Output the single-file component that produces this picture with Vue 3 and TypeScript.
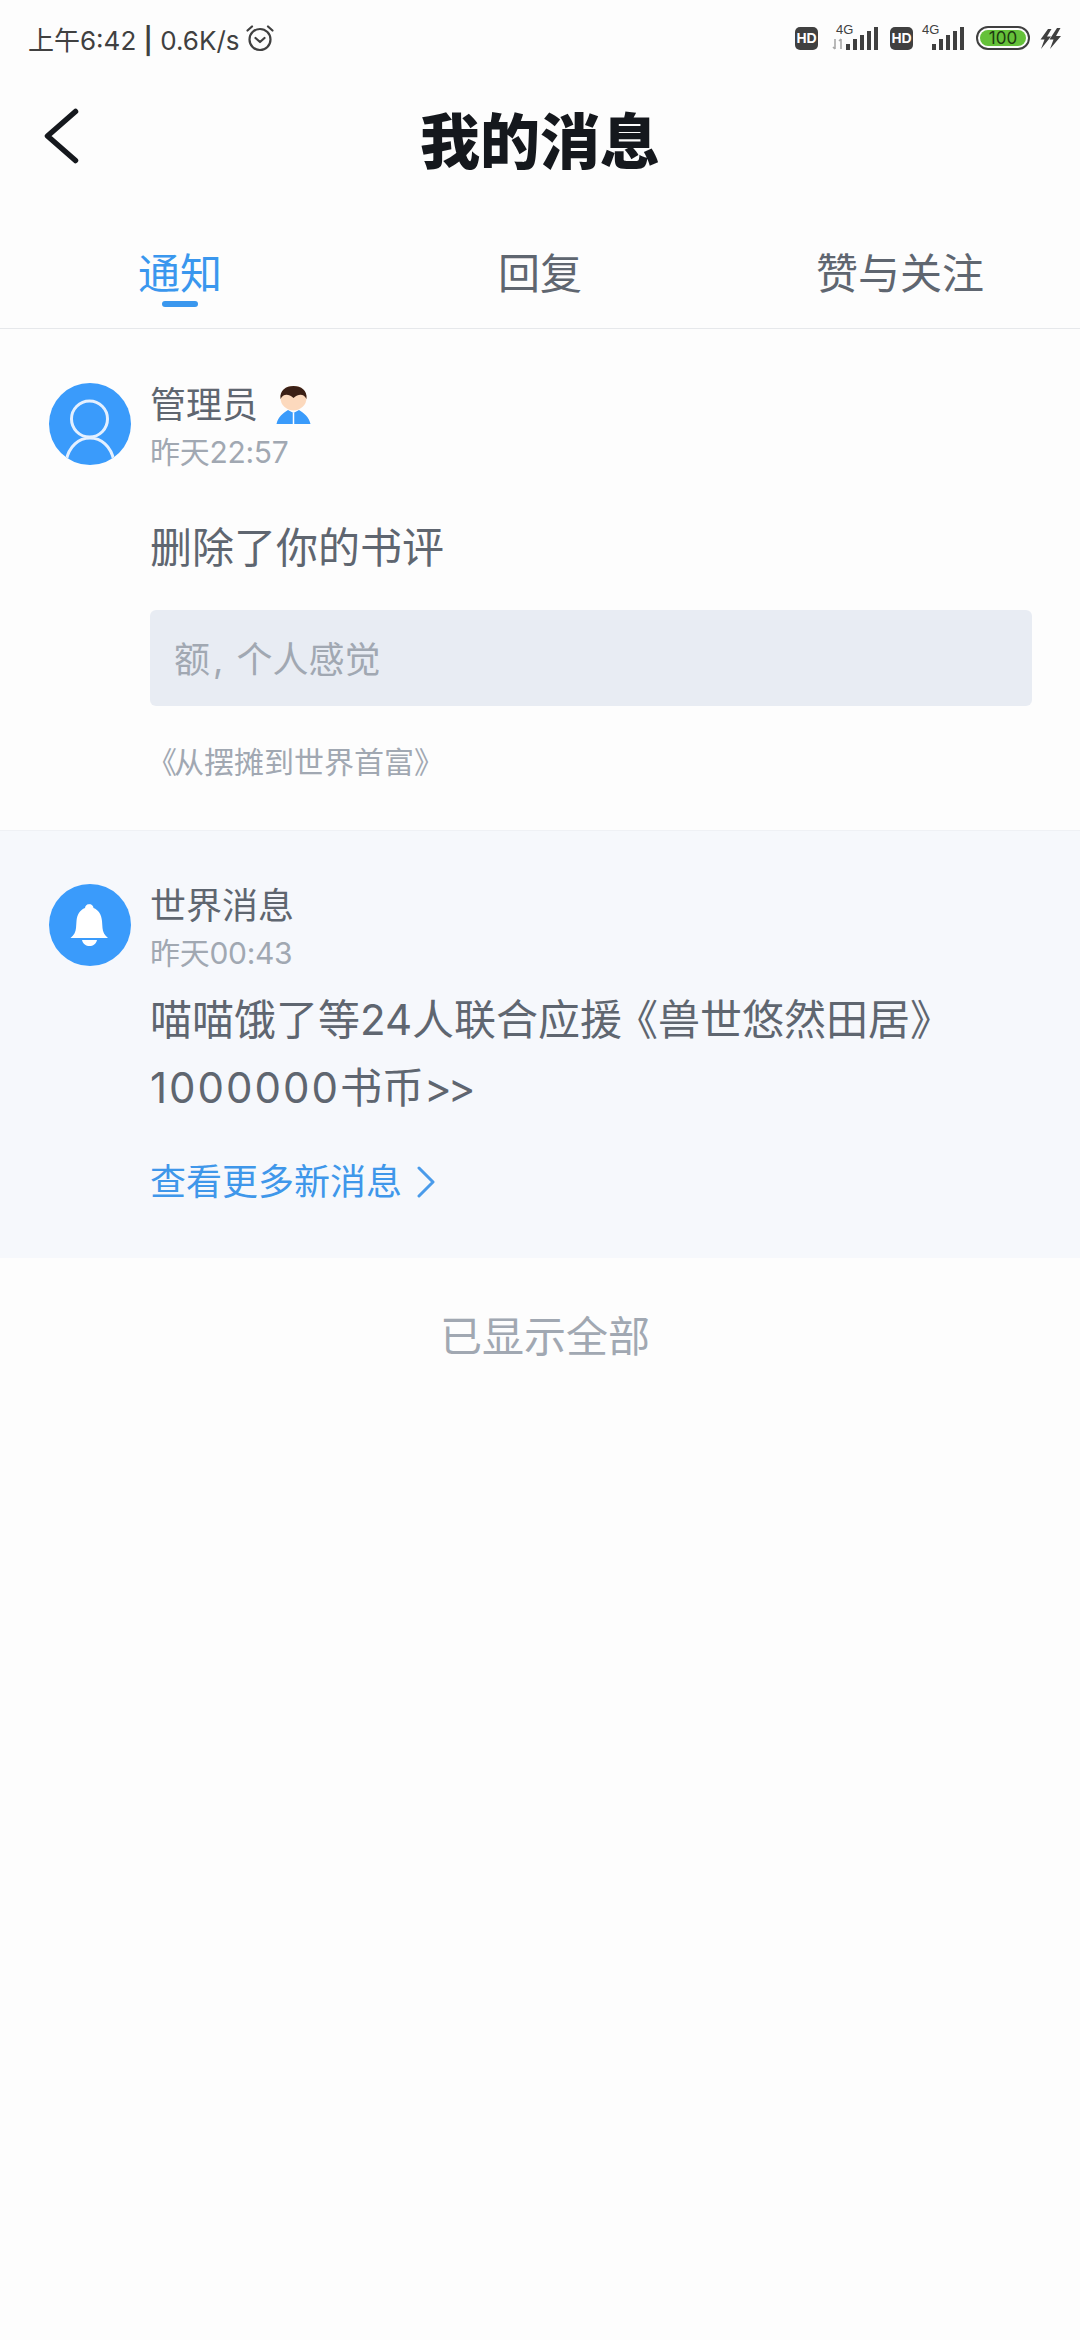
<template>
  <div class="page">
    <div class="status-bar">
      <div class="status-left">
        <span>上午6:42 <b>|</b> 0.6K/s</span>
        <svg class="alarm" viewBox="0 0 28 28" width="28" height="28" fill="none" stroke="#404040" stroke-width="2.2" stroke-linecap="round" stroke-linejoin="round">
          <circle cx="14" cy="15.5" r="10.5" />
          <path d="M9.5 14l4.5 4 4.5-4" />
          <path d="M1.5 6.5L6 2.5M26.500 6.500L22 2.500" />
        </svg>
      </div>
      <div class="status-right">
        <span class="hd">HD</span>
        <div class="signal">
          <span class="net">4G</span>
          <svg class="arrows" viewBox="0 0 12 12" width="12" height="12" fill="none" stroke="#a8a8a8" stroke-width="1.6"><path d="M3 1v10M1 9l2 2M9 11V1M7 3l2-2" /></svg>
          <span class="bars"><i v-for="h in barHeights" :key="h" :style="{ height: h + 'px' }"></i></span>
        </div>
        <span class="hd second">HD</span>
        <div class="signal narrow">
          <span class="net">4G</span>
          <span class="bars"><i v-for="h in barHeights" :key="h" :style="{ height: h + 'px' }"></i></span>
        </div>
        <div class="battery"><span>100</span></div>
        <svg class="bolt" viewBox="0 0 24 24" width="24" height="24" fill="#404040">
          <path d="M9 3h3.500L8 10.500h4L2 23l3.500-9.500H1.500zM18 2h3.500L17 10h5L11 23l3.500-9.500H10.500z" />
        </svg>
      </div>
    </div>

    <div class="nav">
      <svg class="back" viewBox="0 0 38 60" width="38" height="60" fill="none" stroke="#15181d" stroke-width="5.500" stroke-linecap="round" stroke-linejoin="round">
        <path d="M33.500 5.500L5.500 30l28 24.500" />
      </svg>
      <h1>我的消息</h1>
    </div>

    <div class="tabs">
      <div v-for="(t, i) in tabs" :key="t" class="tab" :class="{ active: i === 0 }">{{ t }}</div>
    </div>

    <section class="card admin">
      <div class="head">
        <div class="avatar">
          <svg viewBox="0 0 82 82" width="82" height="82" fill="none" stroke="#e4f0ff" stroke-width="3">
            <circle cx="40.500" cy="36" r="18" />
            <path d="M17 78C20 63 30 55 41 55s21 8 24 23" />
          </svg>
        </div>
        <div class="who">
          <div class="name">
            管理员
            <svg class="badge" viewBox="0 0 35 39" width="35" height="39">
              <path d="M.5 38C2 31 7 27 12 24l5.500 3 5.500-3c5 3 10 7 11.500 14z" fill="#3a9bfb" />
              <ellipse cx="17.500" cy="12" rx="13" ry="12.500" fill="#fcd9bd" />
              <path d="M4.500 13C3.500 4 10 0 17.500 0S31.500 4 30.500 13C28 8 23 7 17.500 12 12 7 7 8 4.500 13z" fill="#3b2016" />
              <path d="M17.500 27v11" stroke="#fff" stroke-width="1.500" />
            </svg>
          </div>
          <div class="time">昨天22:57</div>
        </div>
      </div>
      <div class="body">
        <p class="action">删除了你的书评</p>
        <div class="quote">额<span class="comma">,</span> 个人感觉</div>
        <div class="book"><span class="bk">《</span>从摆摊到世界首富》</div>
      </div>
    </section>

    <section class="card world">
      <div class="head">
        <div class="avatar">
          <svg viewBox="0 0 82 82" width="82" height="82" fill="#fff">
            <path d="M40.500 20c-2.500 0-4.500 2-4.500 4-5 2-8 6.500-8.500 13l-.5 7c-.3 4-2 7-5.500 10H59c-3.500-3-5.200-6-5.500-10l-.5-7c-.5-6.500-3.500-11-8.500-13 0-2-2-4-4.500-4z" />
            <path d="M33 56h15c-1 4-4 6-7.500 6s-6.500-2-7.500-6z" />
          </svg>
        </div>
        <div class="who">
          <div class="name">世界消息</div>
          <div class="time">昨天00:43</div>
        </div>
      </div>
      <div class="body">
        <p class="text">喵喵饿了等24人联合应<span class="tight">援</span>《兽世悠然田居》<br /><span class="digits">1000000</span>书币<span class="gt">&gt;&gt;</span></p>
        <a class="more">
          查看更多新消息
          <svg viewBox="0 0 20 32" width="20" height="32" fill="none" stroke="#4a9bea" stroke-width="3" stroke-linecap="round" stroke-linejoin="round"><path d="M3 2l14 14L3 30" /></svg>
        </a>
      </div>
    </section>

    <div class="end">已显示全部</div>
  </div>
</template>

<script setup lang="ts">
const tabs: string[] = ['通知', '回复', '赞与关注']
const barHeights: number[] = [6, 11, 15, 19, 23]
</script>

<style>
html,
body {
  background: #fdfdfd;
}
</style>

<style scoped>
.page {
  width: 1080px;
  height: 2340px;
  overflow: hidden;
  background: #fdfdfd;
  font-family: Inter, "Noto Sans CJK SC", sans-serif;
  color: #5f6670;
}

.status-bar {
  height: 76px;
  padding: 0 17px 0 28px;
  display: flex;
  justify-content: space-between;
  align-items: center;
  color: #404040;
}
.status-left {
  display: flex;
  align-items: center;
  gap: 6px;
  font-size: 26px;
}
.status-left b {
  font-weight: 600;
}
.status-right {
  display: flex;
  align-items: center;
}
.hd {
  width: 23px;
  height: 23px;
  border-radius: 5px;
  background: #404040;
  color: #fff;
  font-size: 14px;
  font-weight: 700;
  line-height: 23px;
  text-align: center;
  font-family: "Liberation Sans", sans-serif;
}
.hd.second {
  margin-left: 12px;
}
.signal {
  position: relative;
  display: flex;
  align-items: flex-end;
  justify-content: flex-end;
  width: 46px;
  height: 23px;
  margin-left: 14px;
}
.signal.narrow {
  width: 40px;
  margin-left: 11px;
}
.net {
  position: absolute;
  left: 4px;
  top: -5px;
  font-size: 13px;
  font-family: "Liberation Sans", sans-serif;
}
.narrow .net {
  left: -2px;
}
.arrows {
  position: absolute;
  left: 0;
  bottom: 0;
}
.bars {
  display: flex;
  align-items: flex-end;
  gap: 3px;
}
.bars i {
  display: block;
  width: 4px;
  background: #404040;
}
.battery {
  width: 54px;
  height: 24px;
  margin-left: 12px;
  padding: 2px;
  box-sizing: border-box;
  border: 2px solid #404040;
  border-radius: 12px;
}
.battery span {
  display: block;
  height: 16px;
  border-radius: 8px;
  background: #65c13a;
  color: #1d3a10;
  font-size: 17px;
  line-height: 16px;
  text-align: center;
}
.bolt {
  margin-left: 9px;
}

.nav {
  position: relative;
  height: 122px;
  display: flex;
  align-items: center;
  justify-content: center;
}
.back {
  position: absolute;
  left: 42px;
  top: 30px;
}
.nav h1 {
  margin: 0;
  color: #15181d;
  font-size: 60px;
  font-weight: 900;
}

.tabs {
  height: 131px;
  display: flex;
  justify-content: space-between;
  padding: 0 60px;
  border-bottom: 1px solid #e6e8eb;
  box-sizing: border-box;
}
.tab {
  position: relative;
  width: 240px;
  text-align: center;
  padding-top: 46px;
  font-size: 42px;
  line-height: 60px;
}
.tab.active {
  color: #3a97ee;
}
.tab.active::after {
  content: "";
  position: absolute;
  left: 102px;
  top: 103px;
  width: 36px;
  height: 6px;
  border-radius: 3px;
  background: #3a97ee;
}

.card {
  padding: 0 48px 0 49px;
  box-sizing: border-box;
}
.admin {
  height: 501px;
  padding-top: 54px;
}
.world {
  height: 428px;
  padding-top: 53px;
  background: #f6f8fc;
  border-top: 1px solid #eff1f5;
}
.head {
  display: flex;
  gap: 19px;
}
.avatar {
  width: 82px;
  height: 82px;
  border-radius: 50%;
  background: #3a9bfb;
  overflow: hidden;
  flex: none;
}
.avatar svg {
  display: block;
}
.name {
  display: flex;
  align-items: center;
  gap: 18px;
  height: 44px;
  font-size: 36px;
  line-height: 44px;
}
.time {
  margin-top: 5px;
  height: 40px;
  color: #a1a8b2;
  font-size: 30px;
  line-height: 40px;
  letter-spacing: -0.3px;
}
.body {
  margin-left: 101px;
}
.action {
  margin: 46px 0 0;
  font-size: 42px;
  line-height: 60px;
}
.quote {
  margin-top: 32px;
  height: 96px;
  padding-left: 24px;
  border-radius: 6px;
  background: #e8ecf3;
  color: #a1a8b2;
  font-size: 36px;
  line-height: 100px;
}
.comma {
  margin: 0 3px;
}
.book {
  margin-top: 34px;
  color: #a1a8b2;
  font-size: 30px;
  line-height: 44px;
}
.bk {
  margin-left: -3px;
  letter-spacing: -3px;
}
.text {
  margin: 13px 0 0;
  font-size: 42px;
  line-height: 68px;
}
.tight {
  letter-spacing: -6px;
}
.digits {
  letter-spacing: 2px;
}
.gt {
  letter-spacing: -4px;
}
.more {
  display: flex;
  align-items: center;
  gap: 14px;
  margin-top: 36px;
  color: #3f97ea;
  font-size: 36px;
  line-height: 48px;
}
.end {
  margin-top: 49px;
  padding-left: 10px;
  text-align: center;
  color: #a1a8b2;
  font-size: 42px;
  line-height: 60px;
}
</style>
